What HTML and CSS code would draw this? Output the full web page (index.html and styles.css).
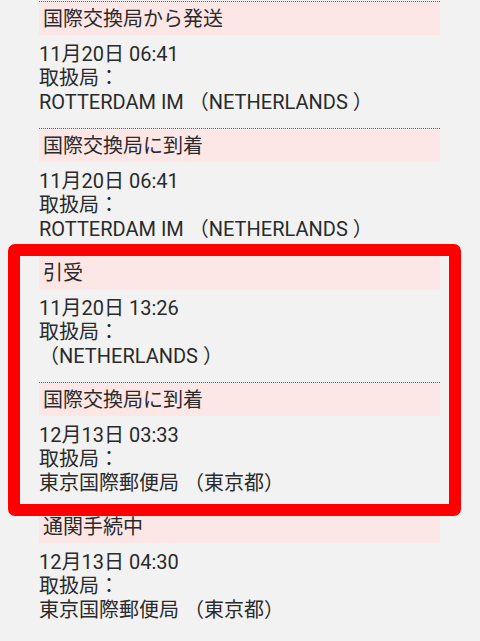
FILE: index.html
```html
<!DOCTYPE html>
<html lang="ja">
<head>
<meta charset="utf-8">
<title>追跡</title>
<link rel="stylesheet" href="styles.css">
</head>
<body>
<div class="list">
  <div class="entry">
    <div class="status">国際交換局から発送</div>
    <div class="detail">
      <div>11月20日 06:41</div>
      <div>取扱局：</div>
      <div>ROTTERDAM IM （NETHERLANDS ）</div>
    </div>
  </div>
  <div class="entry">
    <div class="status">国際交換局に到着</div>
    <div class="detail">
      <div>11月20日 06:41</div>
      <div>取扱局：</div>
      <div>ROTTERDAM IM （NETHERLANDS ）</div>
    </div>
  </div>
  <div class="entry">
    <div class="status">引受</div>
    <div class="detail">
      <div>11月20日 13:26</div>
      <div>取扱局：</div>
      <div>（NETHERLANDS ）</div>
    </div>
  </div>
  <div class="entry">
    <div class="status">国際交換局に到着</div>
    <div class="detail">
      <div>12月13日 03:33</div>
      <div>取扱局：</div>
      <div>東京国際郵便局 （東京都）</div>
    </div>
  </div>
  <div class="entry">
    <div class="status">通関手続中</div>
    <div class="detail">
      <div>12月13日 04:30</div>
      <div>取扱局：</div>
      <div>東京国際郵便局 （東京都）</div>
    </div>
  </div>
</div>
<div class="highlight"></div>
</body>
</html>
```
FILE: styles.css
```css
html, body {
  margin: 0;
  padding: 0;
}
body {
  background: #f2f2f2;
  font-family: Roboto, "Noto Sans CJK JP", sans-serif;
  color: #2a2a2a;
  font-size: 20px;
  width: 480px;
  height: 641px;
  overflow: hidden;
  position: relative;
}
.list {
  margin: 1px 0 0 39px;
  width: 401px;
}
.entry {
  border-top: 1px dotted #b23a3a;
}
.status {
  background: #fde6e6;
  height: 33px;
  line-height: 34px;
  padding-left: 4px;
}
.detail {
  padding: 7px 0 14px 0;
  line-height: 24px;
}
.highlight {
  position: absolute;
  left: 8px;
  top: 244px;
  width: 429px;
  height: 248px;
  border: 12px solid #ff0000;
  border-radius: 7px;
}
```
